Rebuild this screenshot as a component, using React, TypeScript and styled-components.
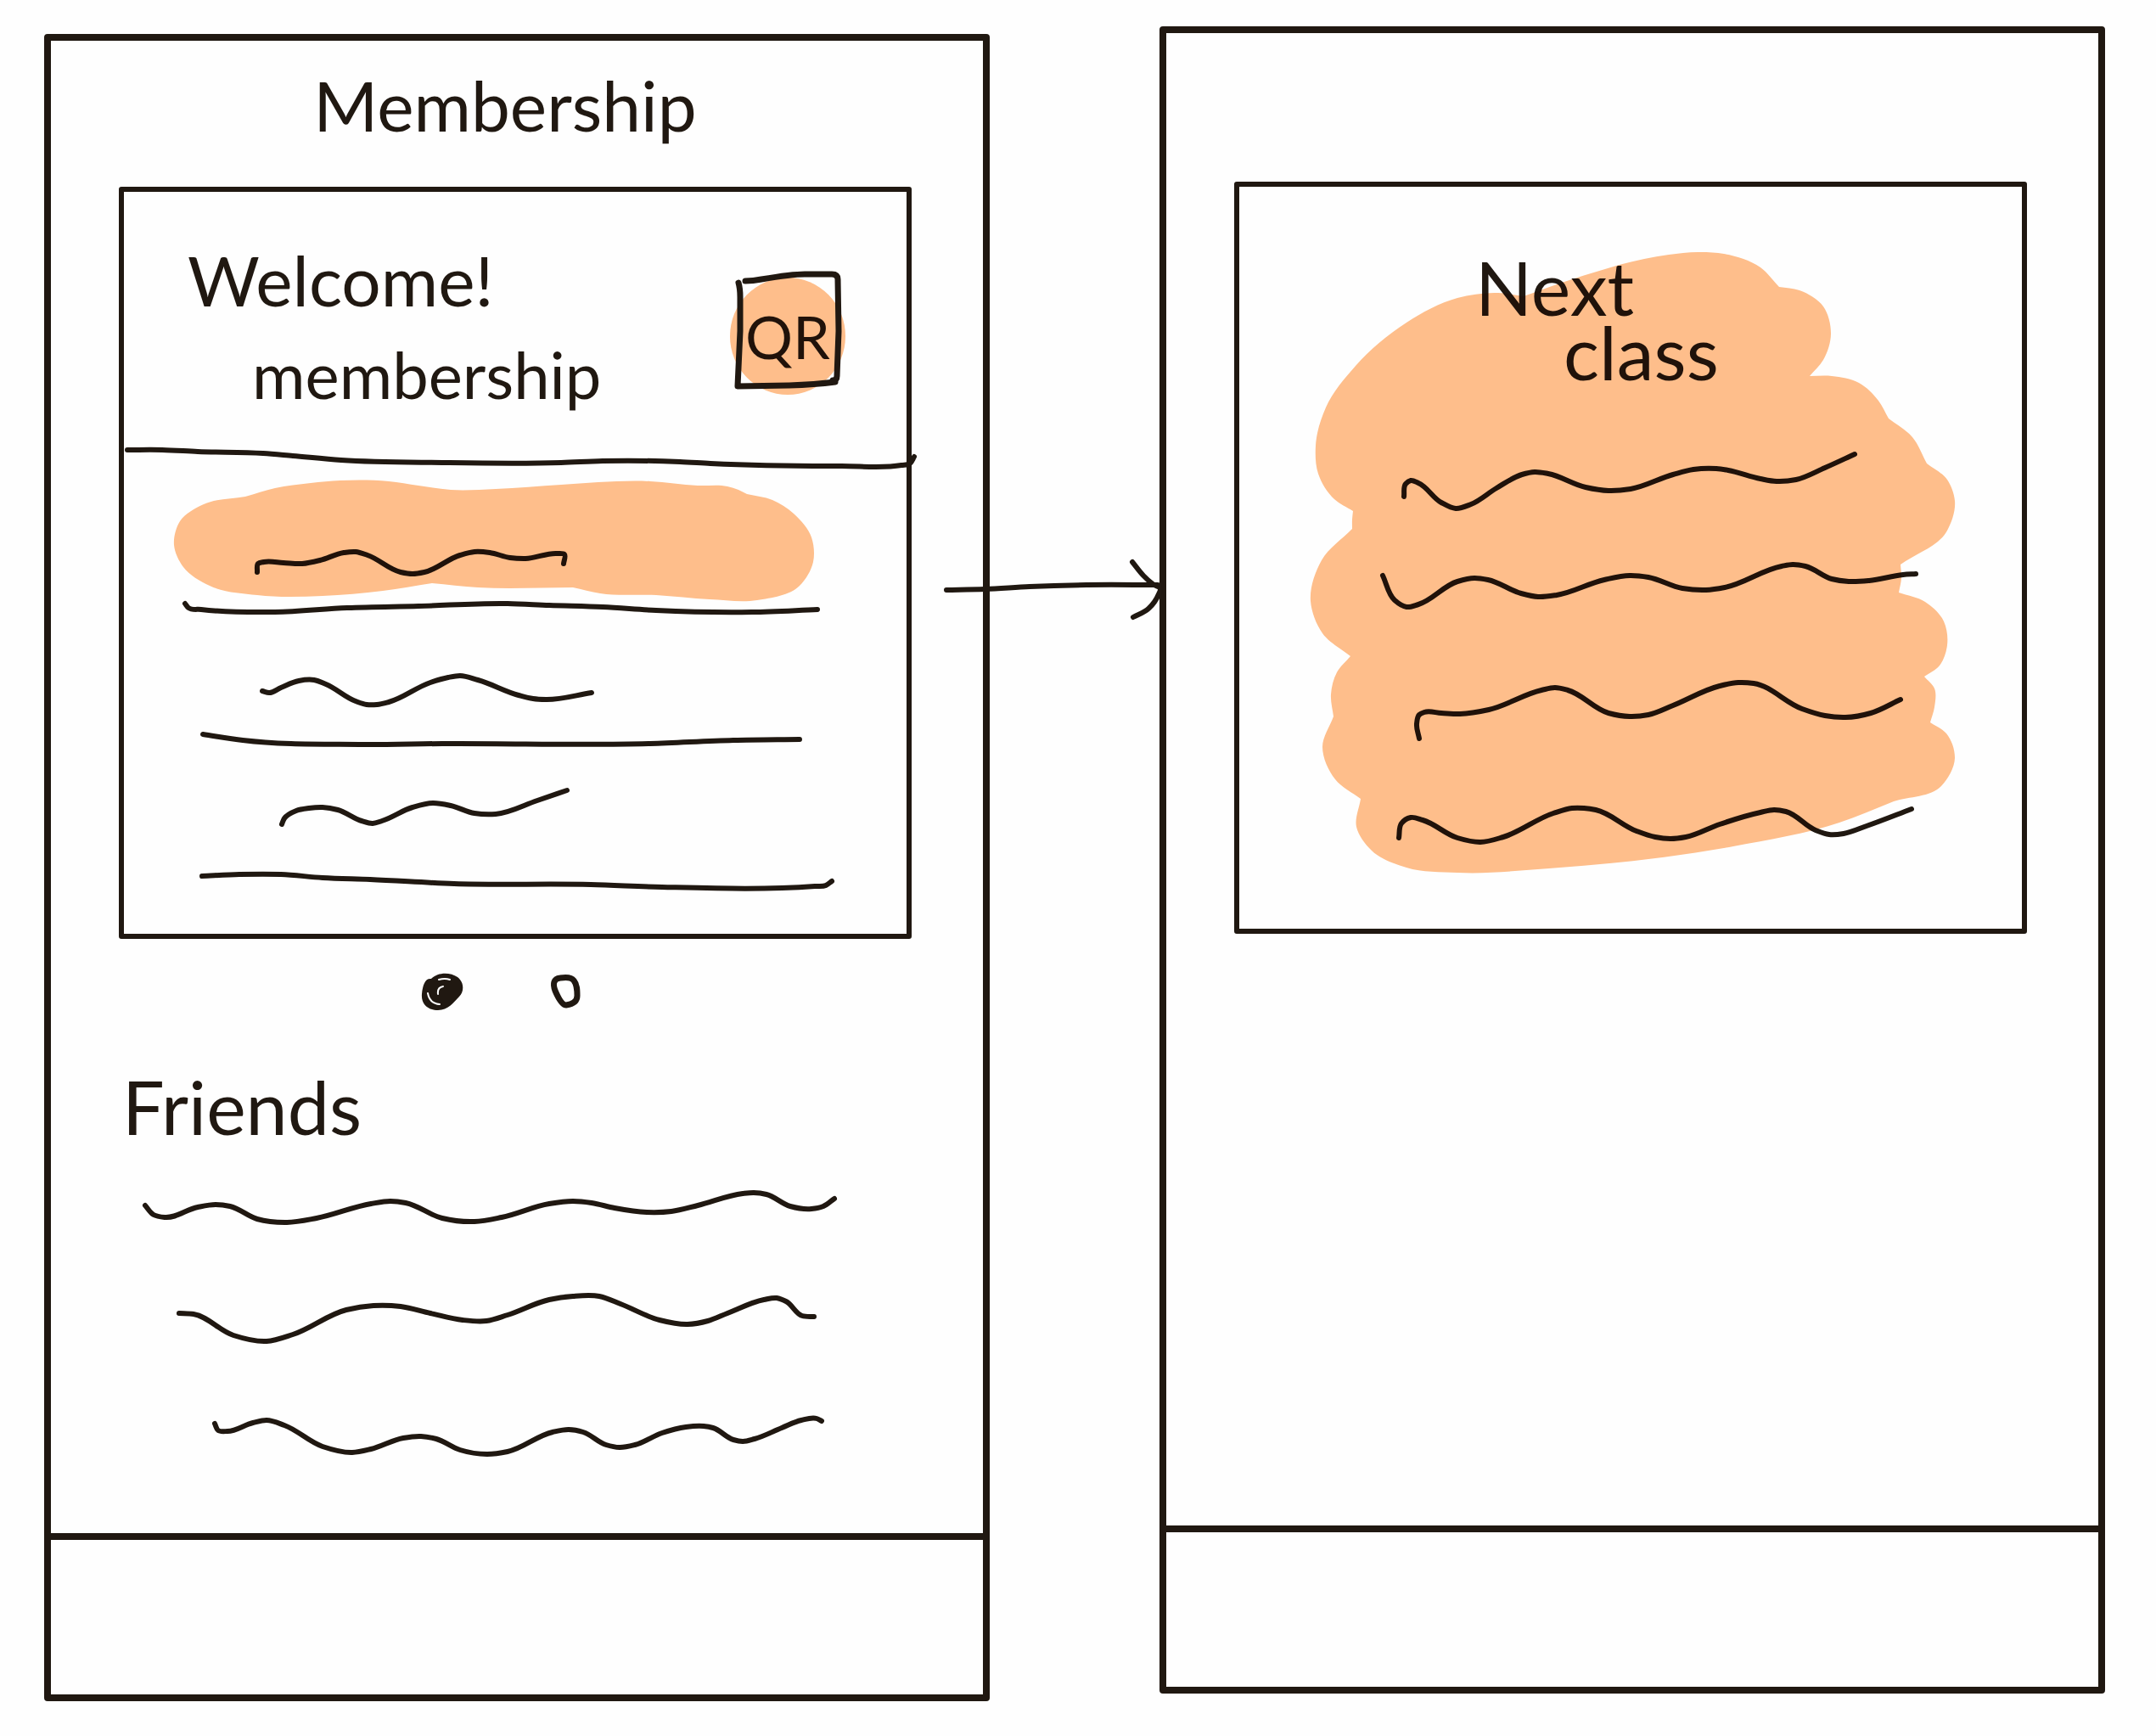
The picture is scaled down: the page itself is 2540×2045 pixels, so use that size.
import React from "react";
import styled, { createGlobalStyle } from "styled-components";

type Point = [number, number];

const INK = "#201811";
const HIGHLIGHT = "#ffbf8c";
const HAND = 'Lato, "Open Sans", "Liberation Sans", sans-serif';

const GlobalStyle = createGlobalStyle`
  *, *::before, *::after { box-sizing: border-box; }
  body { margin: 0; background: #fefefe; color: ${INK}; font-family: ${HAND}; }
`;

/* ---------- stroke helpers ---------- */

// "x,y x,y ..." to a list of points
const parse = (s: string): Point[] =>
  s.trim().split(/\s+/).map((p) => p.split(",").map(Number) as Point);

const distance = (a: Point, b: Point) => Math.hypot(b[0] - a[0], b[1] - a[1]) || 1;

// unit-speed direction of the curve at b; the nearer neighbour weighs more
const direction = (a: Point | undefined, b: Point, c: Point | undefined): Point => {
  if (!a && c) return [(c[0] - b[0]) / distance(b, c), (c[1] - b[1]) / distance(b, c)];
  if (!c && a) return [(b[0] - a[0]) / distance(a, b), (b[1] - a[1]) / distance(a, b)];
  if (!a || !c) return [0, 0];
  const d1 = distance(a, b);
  const d2 = distance(b, c);
  return [0, 1].map(
    (k) => (((b[k] - a[k]) / d1) * d2 + ((c[k] - b[k]) / d2) * d1) / (d1 + d2)
  ) as Point;
};

// smooth cubic segments through the points
const curve = (pts: Point[]): string => {
  let d = "";
  for (let i = 0; i < pts.length - 1; i++) {
    const b = pts[i];
    const c = pts[i + 1];
    const reach = distance(b, c) / 3;
    const u = direction(pts[i - 1], b, c);
    const v = direction(b, c, pts[i + 2]);
    d += `C${b[0] + u[0] * reach} ${b[1] + u[1] * reach} ${c[0] - v[0] * reach} ${
      c[1] - v[1] * reach
    } ${c[0]} ${c[1]}`;
  }
  return d;
};

const stroke = (s: string) => {
  const pts = parse(s);
  return `M${pts[0][0]} ${pts[0][1]}${curve(pts)}`;
};

// closed marker patch: each lobe is smooth, lobes meet in a corner
const patch = (lobes: string[]) => {
  const all = lobes.map(parse);
  const start = all[0][0];
  let last = start;
  let d = `M${start[0]} ${start[1]}`;
  all.forEach((pts, i) => {
    d += curve(i === 0 ? pts : [last, ...pts]);
    last = pts[pts.length - 1];
  });
  return d + "Z";
};

/* ---------- parts ---------- */

const Board = styled.main`
  display: grid;
  grid-template-columns: minmax(0, 1fr) 200px minmax(0, 1fr);
  align-items: start;
  padding: 0 60px 40px 52px;
`;

const Phone = styled.section<{ $top: number }>`
  display: flex;
  flex-direction: column;
  margin-top: ${(p) => p.$top}px;
  border: 8px solid ${INK};
  border-radius: 4px;
`;

const Screen = styled.div`
  min-height: 1758px;
  padding: 0 84px 0 80px;
`;

const TabBar = styled.nav`
  height: 190px;
  border-top: 8px solid ${INK};
`;

const TitleBar = styled.header<{ $height: number }>`
  height: ${(p) => p.$height}px;
  padding: 23px 24px 0 0;
  text-align: center;
`;

const Title = styled.h1`
  margin: 0;
  font-size: 82px;
  line-height: 104px;
  font-weight: 400;
`;

const Card = styled.article`
  position: relative;
  border: 6px solid ${INK};
  border-radius: 3px;
`;

const CardHead = styled.div`
  display: flex;
  justify-content: space-between;
  height: 284px;
  padding: 51px 72px 0 75px;
`;

const Greeting = styled.p`
  margin: 0;
  font-size: 82px;
  line-height: 104px;
`;

const PlanName = styled.p`
  margin: 0;
  padding: 8px 0 0 76px;
  font-size: 76px;
  line-height: 104px;
`;

const QrButton = styled.button`
  position: relative;
  width: 136px;
  height: 140px;
  margin-top: 49px;
  padding: 0;
  border: 0;
  background: none;
  color: ${INK};
  font-family: ${HAND};
  font-size: 70px;
  line-height: 136px;
  cursor: pointer;
`;

const Drawing = styled.svg`
  display: block;
  width: 100%;
  height: auto;
  overflow: visible;
  fill: none;
  stroke: ${INK};
  stroke-width: 6;
  stroke-linecap: round;
  stroke-linejoin: round;
`;

const Overlay = styled(Drawing)`
  position: absolute;
  inset: 0;
  height: 100%;
  stroke-width: 7;
  pointer-events: none;
  mix-blend-mode: multiply;
`;

const Marker = styled.path`
  fill: ${HIGHLIGHT};
  stroke: none;
  mix-blend-mode: multiply;
`;

const Rows = styled.ul`
  margin: 0;
  padding: 0;
  list-style: none;
`;

const Pager = styled.div`
  display: flex;
  gap: 104px;
  padding: 40px 0 40px 356px;
`;

const PagerDot = styled.button<{ $width: number }>`
  width: ${(p) => p.$width}px;
  height: 44px;
  padding: 0;
  border: 0;
  background: none;
  cursor: pointer;
`;

const SectionTitle = styled.h2`
  margin: 0;
  padding: 21px 0 0 4px;
  font-size: 88px;
  line-height: 104px;
  font-weight: 400;
`;

const ClassTitle = styled.h2`
  margin: 0;
  padding: 80px 0 0 278px;
  font-size: 88px;
  line-height: 76px;
  font-weight: 400;
`;

const SecondLine = styled.span`
  display: block;
  padding-left: 104px;
`;

const ClassRows = styled.div`
  margin-top: -2px;
`;

const ArrowSlot = styled.div`
  position: relative;
  z-index: 1;
  padding-top: 650px;
`;

/* ---------- drawings ---------- */

type Row = { box: string; strokes: string[]; marker?: string[] };

const divider =
  "150,530 191,530 233,532 310,534 345,537 402,542 521,545 661,545 710,543 801,544 837,546 991,549 1062,548 1072,546 1077,538";

const memberRows: Row[] = [
  {
    box: "146 558 922 172",
    strokes: [
      "303,674 304,664 311,662 334,663 356,664 377,660 405,651 419,650 433,654 472,674 486,676 500,674 542,654 559,650 577,651 601,657 619,658 656,652 665,653 664,664",
      "218,711 222,716 237,718 324,721 409,716 493,714 598,711 647,713 710,715 773,719 886,721 963,718",
    ],
    marker: [
      "289,585 324,575 366,569 401,566 458,567 493,572 531,577 584,576 661,571 766,567 822,572 857,573 870,577 880,582",
      "910,589 935,605 956,633 958,662 942,690 892,707 836,706 773,701 707,699 675,692",
      "563,692 509,687",
      "451,696 380,702 303,701 247,690 216,668 205,642 212,614 240,594 289,585",
    ],
  },
  {
    box: "146 730 922 160",
    strokes: [
      "309,814 317,816 331,810 352,802 370,801 384,806 419,826 432,830 444,830 458,827 507,804 528,798 542,796 563,801 611,819 628,823 643,824 697,816",
      "239,865 286,872 423,877 521,876 766,876 864,872 942,871",
    ],
  },
  {
    box: "146 890 922 210",
    strokes: [
      "332,971 335,964 349,955 364,952 380,951 398,954 426,967 439,970 450,967 486,951 510,946 531,949 559,958 584,959 633,943 668,931",
      "238,1032 282,1030 331,1030 380,1034 436,1036 535,1041 696,1042 780,1045 960,1044 973,1043 980,1038",
    ],
  },
];

const friendRows: Row[] = [
  {
    box: "140 1355 934 135",
    strokes: [
      "171,1420 181,1431 194,1434 233,1422 254,1419 271,1421 303,1436 338,1440 373,1435 437,1418 460,1415 478,1417 521,1435 559,1439 591,1434 647,1418 675,1415 697,1417 724,1423 762,1428 791,1427 822,1420 875,1406 888,1405 903,1407 931,1421 956,1424 970,1421 983,1412",
    ],
  },
  {
    box: "140 1490 934 135",
    strokes: [
      "211,1547 228,1548 275,1573 314,1580 345,1572 408,1543 440,1538 472,1539 507,1547 545,1555 573,1556 598,1549 647,1531 675,1527 706,1527 731,1536 777,1555 810,1560 834,1556 857,1547 900,1531 915,1529 926,1533 945,1550 959,1551",
    ],
  },
  {
    box: "140 1625 934 135",
    strokes: [
      "253,1677 257,1685 268,1686 298,1676 314,1673 335,1679 380,1704 415,1711 437,1707 475,1694 496,1692 514,1695 542,1708 574,1713 598,1710 651,1687 670,1684 687,1687 714,1702 730,1705 748,1702 780,1688 808,1681 829,1680 840,1682 864,1696 875,1698 889,1695 921,1682 944,1673 962,1671 968,1674",
    ],
  },
];

const classRows: Row[] = [
  {
    box: "1460 450 922 180",
    strokes: [
      "1654,585 1656,570 1662,566 1671,569 1698,592 1715,599 1733,594 1763,575 1793,559 1808,556 1824,558 1868,574 1895,578 1921,576 1971,559 1995,553 2022,552 2036,554 2074,564 2093,567 2116,565 2150,551 2185,535",
    ],
  },
  {
    box: "1460 630 922 120",
    strokes: [
      "1629,678 1643,707 1657,715 1671,712 1717,685 1737,681 1753,683 1792,699 1812,703 1834,701 1890,683 1920,678 1942,680 1982,693 2010,695 2032,692 2099,667 2112,665 2127,667 2158,682 2178,685 2202,684 2242,677 2257,676",
    ],
  },
  {
    box: "1460 750 922 150",
    strokes: [
      "1672,870 1669,853 1672,842 1678,839 1698,840 1720,841 1754,836 1816,813 1832,810 1847,813 1895,840 1920,844 1942,842 1971,831 2026,808 2048,804 2066,805 2123,835 2150,843 2174,845 2204,840 2239,824",
    ],
  },
  {
    box: "1460 900 922 194",
    strokes: [
      "1648,987 1651,970 1662,963 1676,966 1717,987 1744,992 1771,986 1830,958 1852,952 1866,952 1880,954 1928,979 1950,986 1968,988 1986,986 2026,971 2074,957 2090,954 2104,956 2139,978 2155,983 2172,982 2199,973 2252,953",
    ],
  },
];

const classMarker = [
  "1594,602 1572,588 1553,558 1550,525 1562,480 1597,431 1657,380 1717,351 1765,345 1795,349",
  "1852,329 1966,300 2000,297 2031,299 2074,315 2096,338",
  "2120,342 2148,361 2157,393 2148,424 2132,443",
  "2158,443 2190,451 2213,472 2225,493",
  "2253,515 2270,546",
  "2294,565 2303,590 2294,625 2239,665",
  "2240,681 2237,698",
  "2268,709 2290,732 2294,760 2285,784 2267,797",
  "2279,811 2279,833 2274,851",
  "2293,864 2303,893 2287,926 2231,944",
  "2167,969 2042,997 1825,1023 1717,1028 1657,1022 1616,1002 1598,974 1603,941",
  "1573,918 1558,880 1571,844",
  "1568,818 1575,792 1591,773",
  "1558,746 1544,708 1557,660 1593,623",
  "1593,612 1594,602",
];

const DrawnRows = ({ rows }: { rows: Row[] }) => (
  <Rows>
    {rows.map((row) => (
      <li key={row.box}>
        <Drawing viewBox={row.box} aria-hidden="true">
          {row.strokes.map((s) => (
            <path key={s} d={stroke(s)} />
          ))}
          {row.marker && <Marker d={patch(row.marker)} />}
        </Drawing>
      </li>
    ))}
  </Rows>
);

export default function App() {
  return (
    <>
      <GlobalStyle />
      <Board>
        <Phone $top={40}>
          <Screen>
            <TitleBar $height={172}>
              <Title>Membership</Title>
            </TitleBar>
            <Card>
              <CardHead>
                <div>
                  <Greeting>Welcome!</Greeting>
                  <PlanName>membership</PlanName>
                </div>
                <QrButton type="button">
                  QR
                  <Overlay viewBox="860 326 136 140" aria-hidden="true">
                    <ellipse cx="928" cy="396" rx="68" ry="69" fill={HIGHLIGHT} stroke="none" />
                    <path d="M878 331Q887 331 897 329C915 326 935 323 948 323L980 323Q987 323 987 329L988 390L986 443Q986 448 981 448" />
                    <path d="M870 333Q872 340 872 350L872 390L869 455L930 454Q960 453 984 450" />
                  </Overlay>
                </QrButton>
              </CardHead>
              <Drawing viewBox="146 510 922 48" aria-hidden="true">
                <path d={stroke(divider)} />
              </Drawing>
              <DrawnRows rows={memberRows} />
            </Card>
            <Pager>
              <PagerDot type="button" $width={49} aria-label="Membership" aria-current="true">
                <Drawing viewBox="496 1146 49 44" aria-hidden="true">
                  <path
                    fill={INK}
                    stroke="none"
                    d="M508 1153C516 1145 530 1145 539 1151C547 1157 547 1168 541 1174C534 1181 528 1190 516 1190C503 1190 496 1182 497 1171C498 1160 501 1152 508 1153Z"
                  />
                  <path stroke="#fefefe" strokeWidth="2" d="M517 1154Q524 1152 530 1154M504 1170Q506 1182 518 1183M516 1171Q515 1163 522 1162" />
                </Drawing>
              </PagerDot>
              <PagerDot type="button" $width={35} aria-label="Next class">
                <Drawing viewBox="649 1146 35 44" aria-hidden="true">
                  <path
                    strokeWidth="7"
                    d="M660 1152C666 1151 673 1151 676 1155C680 1160 680 1166 680 1173C680 1180 674 1183 667 1184C662 1184 657 1174 654 1167C651 1159 652 1153 660 1152Z"
                  />
                </Drawing>
              </PagerDot>
            </Pager>
            <SectionTitle>Friends</SectionTitle>
            <DrawnRows rows={friendRows} />
          </Screen>
          <TabBar />
        </Phone>

        <ArrowSlot>
          <Drawing viewBox="1166 650 200 90" aria-hidden="true">
            <path d={stroke("1115,695 1160,694 1213,691 1280,689 1364,689")} />
            <path d={stroke("1334,662 1347,678 1358,688 1367,694 1365,700 1353,717 1335,727")} />
          </Drawing>
        </ArrowSlot>

        <Phone $top={31}>
          <Screen>
            <TitleBar $height={175} />
            <Card>
              <ClassTitle>
                Next
                <SecondLine>class</SecondLine>
              </ClassTitle>
              <ClassRows>
                <DrawnRows rows={classRows} />
              </ClassRows>
              <Overlay viewBox="1460 220 922 874" aria-hidden="true">
                <Marker d={patch(classMarker)} />
              </Overlay>
            </Card>
          </Screen>
          <TabBar />
        </Phone>
      </Board>
    </>
  );
}
